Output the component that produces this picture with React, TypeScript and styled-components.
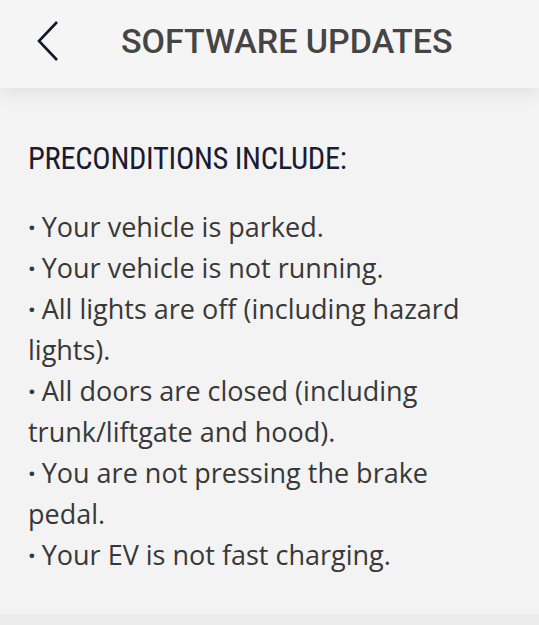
import React from "react";
import styled, { createGlobalStyle } from "styled-components";

const Global = createGlobalStyle`
  html, body { margin: 0; padding: 0; background: #f3f3f3; }
  #root { min-height: 625px; }
`;

const Page = styled.div`
  width: 539px;
  height: 625px;
  display: flex;
  flex-direction: column;
  background: #f3f3f3;
  overflow: hidden;
`;

const Header = styled.header`
  height: 88px;
  box-sizing: border-box;
  padding-bottom: 6px;
  flex: none;
  display: flex;
  align-items: center;
  background: #f5f5f5;
  position: relative;
  z-index: 1;
  box-shadow: 0 6px 16px rgba(0, 0, 0, 0.07);
`;

const BackButton = styled.button`
  border: 0;
  background: none;
  padding: 0;
  margin-left: 34px;
  width: 28px;
  height: 44px;
  display: flex;
  align-items: center;
  justify-content: center;
  cursor: pointer;
`;

const Title = styled.h1`
  margin: 0 0 0 59px;
  font-family: Roboto, "Liberation Sans", sans-serif;
  font-weight: 500;
  font-size: 34px;
  color: #454545;
  letter-spacing: 0;
`;

const Content = styled.main`
  flex: 1;
  padding: 53px 50px 0 28px;
  display: flex;
  flex-direction: column;
`;

const Heading = styled.h2`
  margin: 0 0 30px 0;
  font-family: "Liberation Sans Narrow", "Roboto Condensed", "Open Sans", sans-serif;
  font-weight: 400;
  font-size: 30.5px;
  color: #1c1c30;
  letter-spacing: -0.3px;
`;

const List = styled.ul`
  list-style: none;
  margin: 0;
  padding: 0;
  font-family: "Open Sans", "Noto Sans", sans-serif;
  font-size: 27px;
  line-height: 41px;
  color: #383838;
`;

const Item = styled.li`
  &::before {
    content: "·";
    font-weight: 700;
    margin-right: 6px;
  }
`;

const Footer = styled.div`
  height: 11px;
  background: #ececec;
  flex: none;
`;

const items = [
  "Your vehicle is parked.",
  "Your vehicle is not running.",
  "All lights are off (including hazard lights).",
  "All doors are closed (including trunk/liftgate and hood).",
  "You are not pressing the brake pedal.",
  "Your EV is not fast charging.",
];

export default function App() {
  return (
    <Page>
      <Global />
      <Header>
        <BackButton aria-label="Back">
          <svg width="24" height="42" viewBox="0 0 24 42">
            <path d="M21 2 L3 21 L21 40" fill="none" stroke="#15152b" strokeWidth="2.6" strokeLinecap="butt" strokeLinejoin="miter" />
          </svg>
        </BackButton>
        <Title>SOFTWARE UPDATES</Title>
      </Header>
      <Content>
        <Heading>PRECONDITIONS INCLUDE:</Heading>
        <List>
          {items.map((t) => (
            <Item key={t}>{t}</Item>
          ))}
        </List>
      </Content>
      <Footer />
    </Page>
  );
}
